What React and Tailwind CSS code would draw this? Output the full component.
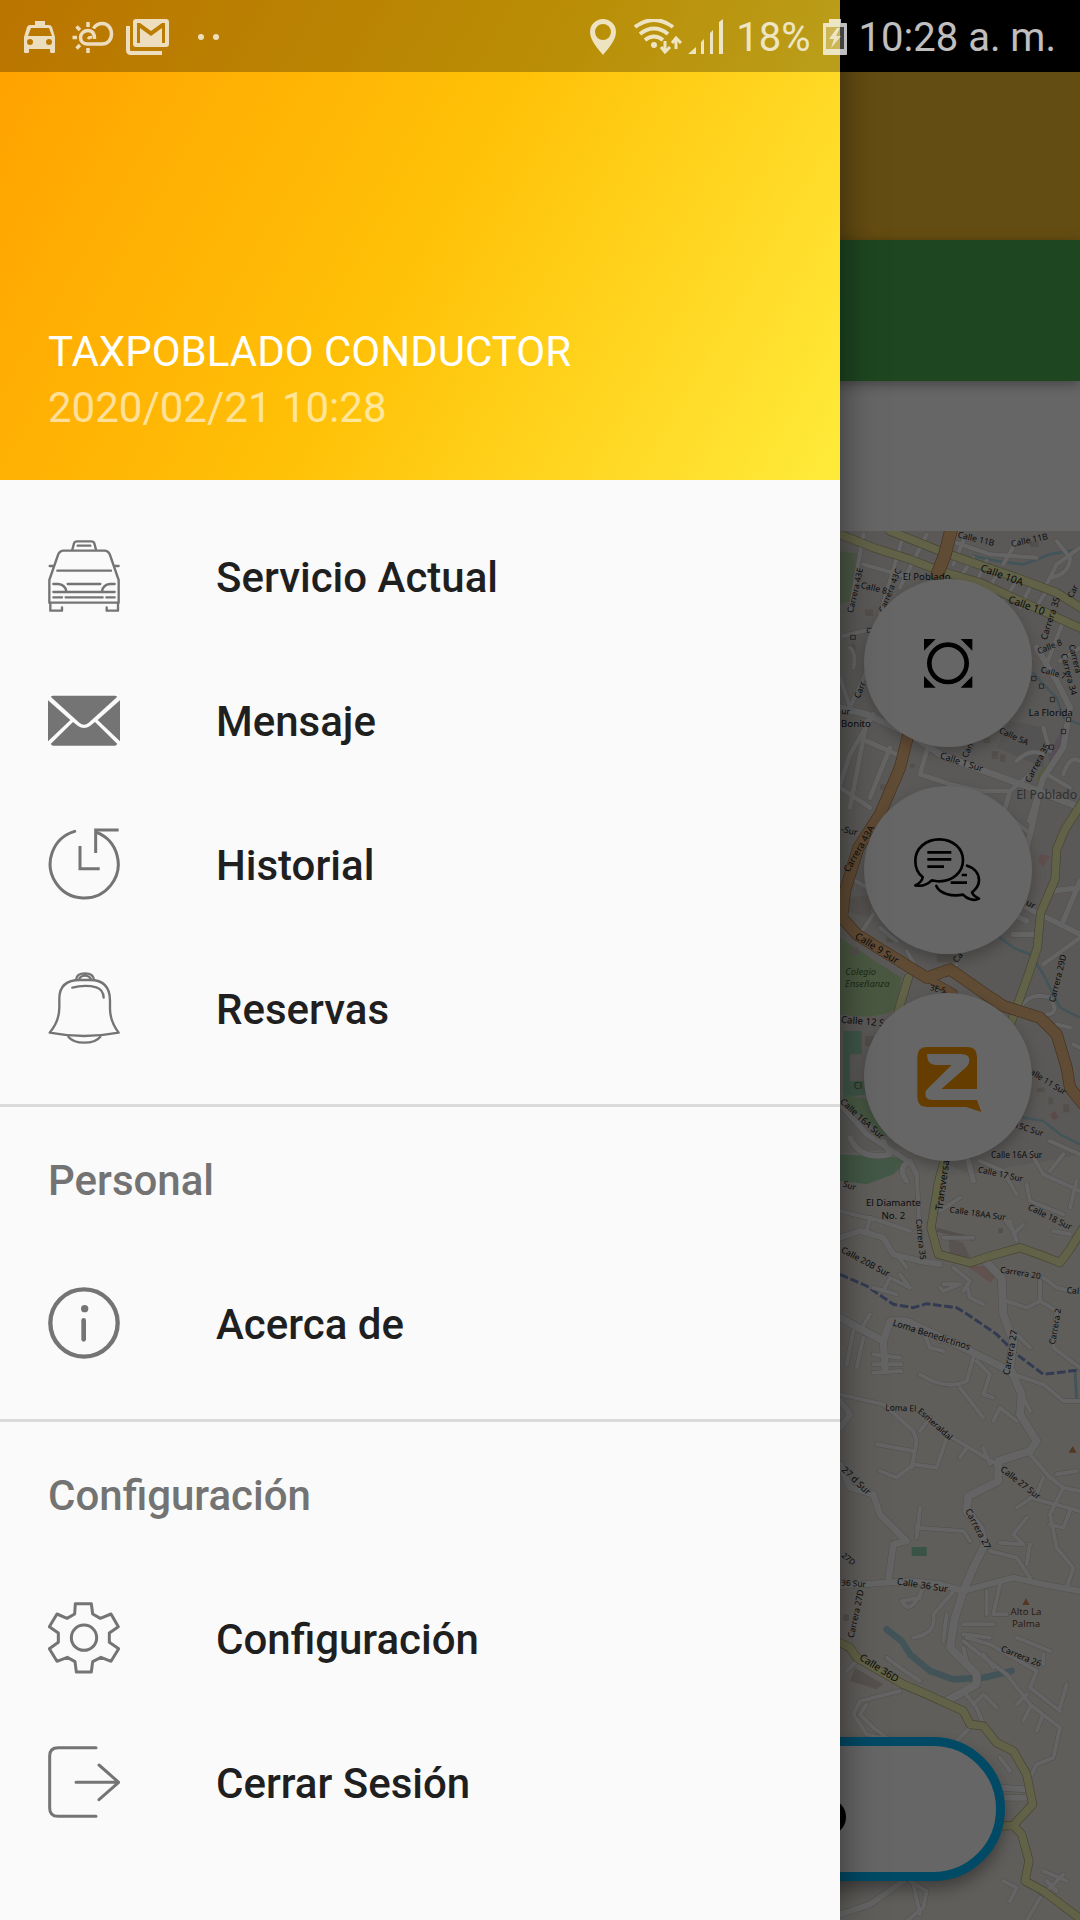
import { useState } from 'react';

// Map geometry. `w` is the road width, all values are in map units.
const landUse = [
    { d: 'M0 0H760V1980H0Z', fill: '#e2deda' },
    { d: 'M0 1900L240 1880L420 1960L760 1900V4300H0Z', fill: '#efebe4' },
    { d: 'M30 90L95 100L70 170L60 240L30 250Z', fill: '#bfdcb0' },
    { d: 'M30 1250L120 1310L215 1370L200 1460Q150 1500 30 1480Z', fill: '#b9dba3' },
    { d: 'M40 1530H95V1600H60V1680H110V1720L40 1730Z', fill: '#9fd6b8' },
    { d: 'M40 1720L140 1740L170 1850L60 1760Z', fill: '#b5dfa9' },
    { d: 'M30 1900L210 1910L230 1925L190 1960L110 1990L30 1980Z', fill: '#a9dcae' },
    { d: 'M540 600L650 620L640 740L500 680Z', fill: '#d3d0cf' },
    { d: 'M655 700L700 620L690 700L660 740Z', fill: '#d8c2d6' },
    { d: 'M625 760L650 730L640 780L620 800Z', fill: '#d3e58f' },
    { d: 'M630 1000L660 1005L640 1040L625 1020Z', fill: '#ecc3bd' },
    { d: 'M60 1130L130 1120L120 1190L45 1170Z', fill: '#d6cfc9' },
    { d: 'M410 2235L470 2235L500 2265L480 2285Z', fill: '#f3cdc6' },
    { d: 'M355 2150L400 2165L420 2210L360 2200Z', fill: '#dccfcb' },
    { d: 'M245 3078H290V3105H245Z', fill: '#8fd0ae' },
    { d: 'M75 3440L160 3490L140 3505L60 3480Z', fill: '#d6cbc5' },
    { d: 'M660 1780L675 1770L685 1790L670 1798Z', fill: '#e0b9b4' },
];

const buildings = [
    'M105 265h24v20h-24z', 'M140 300h16v26h-16z', 'M485 690h20v24h-20z', 'M510 700h16v22h-16z', 'M460 650h20v16h-20z',
    'M600 60h26v18h-26z', 'M62 370h14v24h-14z', 'M240 728h14v12h-14z', 'M150 790h22v16h-22z', 'M530 800h16v24h-16z',
    'M62 1280h24v22h-24z', 'M170 1250h26v14h-26z', 'M320 1300h60v24h-60z', 'M105 1545h26v30h-26z', 'M700 1750h18v24h-18z',
    'M655 1730h14v20h-14z', 'M620 1700h24v14h-24z', 'M320 2120l110 28v12l-110-28z', 'M505 2122h14v14h-14z', 'M40 3280h16v20h-16z',
];

const streets = [
    { w: 12, d: 'M100 40L60 270M215 60L150 280M290 40L210 200M100 130L240 170M400 60L370 130M430 110L390 170M470 120L440 180M510 140L480 200M560 180L520 240M600 200L570 260M650 210L610 270' },
    { w: 12, d: 'M40 345L120 325M60 380Q80 400 70 440M30 470L60 560L110 450M350 55L480 100L620 110M560 60L520 130M680 60L720 110Q720 160 660 170M640 210L680 130L750 80' },
    { w: 20, d: 'M30 560L110 580L240 640L330 700L450 745L600 800L750 860' },
    { w: 14, d: 'M130 580L60 700L30 790M110 600L60 860M180 680L120 830M30 800L120 860M110 660L200 700M290 690L270 760L360 790L450 810L540 810L520 880' },
    { w: 18, d: 'M630 800L610 900L560 1100M620 380L680 480L720 560L700 680L640 770L600 900' },
    { w: 12, d: 'M700 300L650 430L690 500M750 380L690 420M560 720Q600 680 640 700M650 760L720 800M660 690L640 620M700 760Q720 700 750 720M520 870L590 930M540 810L600 760' },
    { w: 16, d: 'M590 1160L650 1190L750 1240M700 1200L750 1080M670 1110L750 1100M550 1240H620M530 1170L590 1200' },
    { w: 12, d: 'M570 1460Q600 1410 660 1430Q690 1480 650 1480M640 1330L750 1250M680 1510L720 1520M730 1570L750 1580M230 1290L260 1340M200 1260L150 1220M90 1240L130 1180M60 1070L130 1110M240 1180L280 1210M340 1370L380 1330' },
    { w: 16, d: 'M235 1920L110 1840L30 1750M60 1850Q90 1920 180 1900L160 1860M230 1980Q200 1940 240 1920L260 1960M415 1920L430 1980' },
    { w: 12, d: 'M450 1920L520 1950L560 2020M600 1890L640 1960L750 2010M660 1860L750 1900M700 1900L660 1950M720 2060L740 1980M590 1990L600 2040L700 2080M540 2100L560 2160M520 2090L550 2130M580 2110L550 2140M670 2130L720 2140M260 1960L270 2140' },
    { w: 18, d: 'M30 2150L90 2130L160 2150L190 2200L270 2220L330 2230' },
    { w: 12, d: 'M110 2130L120 2090L240 2130M30 2070L110 2090M200 2200L230 2240M340 2150H430M340 2290H390L340 2310L330 2300M410 2290L420 2330L460 2350M370 2240L420 2280L400 2310M160 2310L180 2270L240 2300L210 2260M130 2300L200 2320M360 2050L330 2070L390 2030' },
    { w: 22, d: 'M30 2390L160 2460L165 2540M160 2460L180 2400L230 2400L400 2480L540 2550' },
    { w: 12, d: 'M130 2500L210 2510M130 2530L215 2530M130 2555L215 2550M70 2430L50 2530M100 2450L80 2540M120 2380L90 2430M280 2430L300 2480L340 2490M300 2430L330 2460M430 2510L410 2580Q350 2610 270 2560M440 2520L480 2560L460 2620L490 2630M390 2600L460 2690' },
    { w: 24, d: 'M470 2225L515 2270L520 2380L550 2460L540 2540L575 2620L570 2680L620 2760L600 2790L505 2820L505 2880L415 2925L410 2970L450 3020L465 3070L430 3140L400 3210L375 3290L360 3380L440 3460L440 3490L350 3540' },
    { w: 12, d: 'M530 2340L590 2360L630 2340V2280M640 2270L680 2300L720 2310M560 2440L600 2480M630 2340L680 2370L670 2480L750 2540M550 2560L640 2590L700 2640L750 2640M560 2700L510 2660L490 2700M580 2630L600 2670' },
    { w: 12, d: 'M30 2620L160 2650L250 2730L260 2760L245 2840M350 2750L320 2840L250 2830L200 2870L150 2850M140 2770L250 2790M350 2740L500 2830M270 2730L300 2690M390 2810L410 2780M460 2780L480 2830' },
    { w: 20, d: 'M30 2830L60 2900L130 2920L150 2980L210 3040L230 3060L190 3070L175 3180' },
    { w: 18, d: 'M30 3195L240 3180L330 3190L400 3210L550 3170L640 3190L750 3210M30 2640L60 2680L30 2720' },
    { w: 12, d: 'M600 2800L660 2870L700 2900L750 2910M640 2870L620 2920L560 2960M700 2900L660 2980L680 3080L730 3140L710 3200M680 2860L740 2850M600 2930L750 2970M720 2970L700 3020L660 3010M590 2990L550 3040L580 3070L510 3065' },
    { w: 12, d: 'M480 3090L560 3110L600 3170M600 3070L590 3130M260 3020L400 3030L420 3060M260 3050L270 2960M280 3200Q240 3290 215 3240L270 3230M380 3200L310 3280Q320 3340 250 3350M470 3210V3280M510 3190L490 3280H530M400 3310H490M400 3340L480 3350M350 3280L340 3360' },
    { w: 12, d: 'M400 3360L450 3400L530 3460L600 3550L690 3620L670 3710L620 3730L600 3770M400 3380L410 3420M410 3350L480 3370L620 3450L600 3500L690 3570M710 3490L690 3560M560 3350L660 3390M640 3400V3430M640 3580L620 3630M600 3560L580 3600M560 3550L590 3520' },
    { w: 12, d: 'M400 3510L440 3560L460 3610M430 3550L460 3520L500 3560M460 3400L490 3440M210 3510L90 3540L70 3580L110 3640L150 3650M110 3550L90 3580L130 3620L170 3650M170 3410L210 3440L270 3480M50 3450L80 3420M380 3660L420 3620' },
    { w: 18, d: 'M30 4180L120 4150L220 4080M510 3800L590 3805M530 3830H590' },
    { w: 12, d: 'M240 4080L290 4110L280 4160L230 4200M250 4090L270 4180M590 4080L640 4120L700 4060M640 4050L710 4080M650 4080L680 4110M520 4080L560 4100L540 4140M630 4130L590 4200M510 3710L540 3750' },
];

const rivers = [
    { w: 9, d: 'M430 105L500 120L580 130L660 100L750 85', stroke: '#a9d3df' },
    { w: 8, d: 'M610 455L640 490L680 530L700 590L750 610', stroke: '#a9d3df' },
    { w: 8, d: 'M510 1250L550 1280L600 1300L640 1360L690 1460L750 1490', stroke: '#a9d3df' },
    { w: 8, d: 'M580 1790L640 1800L690 1840L750 1870', stroke: '#a9d3df' },
    { w: 20, d: 'M170 3325L215 3360L240 3400L300 3450L370 3475L460 3470L545 3450', stroke: '#a9d3df' },
    { w: 9, d: 'M735 2550L740 2640', stroke: '#a9d3df' },
    { w: 9, d: 'M30 2260L110 2295L190 2350L250 2360L290 2348L380 2360L420 2385L500 2440L560 2500L640 2560L740 2548', stroke: '#7f93cf', dash: '26 8' },
];

const yellowRoads = [
    'M30 40L130 80L240 115L330 150L450 185L560 235L760 325',
    'M180 30L330 90L400 115L560 170L680 215L760 265',
    'M760 840L705 925L680 985L675 1075L632 1175L622 1280L592 1370L545 1500',
    'M235 1370L205 1470',
    'M348 1900L325 1985L303 2120L325 2200L420 2225L480 2205L570 2180L640 2205L690 2225L720 2185L760 2120',
    'M30 3365L60 3380L80 3410L220 3490L290 3520L400 3570L420 3610L460 3615L500 3665L550 3690L590 3760L608 3850L550 3913L520 3915M550 3913L575 3940L597 4020L585 4080L640 4110L760 4200',
];

const orangeRoads = [
    { w: 36, d: 'M365 20L345 100L322 160' },
    { w: 32, d: 'M235 640L210 740L150 880L85 980L45 1110L36 1190L80 1240L160 1290L290 1370L360 1345L460 1415L520 1455L630 1490L680 1540L710 1640L720 1700L760 1750' },
    { w: 20, d: 'M290 1370L370 1415' },
];

const labels = [
    [436, 62, 14, 'Calle 11B', 26], [600, 66, -12, 'Calle 11B', 26], [512, 172, 20, 'Calle 10A', 31], [586, 263, 20, 'Calle 10', 31],
    [290, 178, 0, 'El Poblado', 29], [84, 210, -77, 'Carrera 43E', 25], [188, 212, -68, 'Carrera 43C', 25], [130, 210, 14, 'Calle 8', 26],
    [670, 295, -72, 'Carrera 35', 27], [662, 385, -22, 'Calle 8', 25], [668, 464, 16, 'Calle 7', 25], [708, 462, 76, 'Carrera 34', 26],
    [727, 415, 76, 'Carrera', 25], [736, 215, -62, 'Car', 25], [662, 584, 0, 'La Florida', 29], [46, 580, 5, 'ur', 26],
    [78, 619, 0, 'Bonito', 29], [548, 654, 25, 'Calle 5A', 25], [630, 730, -62, 'Carrera 35', 26], [422, 690, -65, 'Carr', 25],
    [98, 510, -68, 'Carr', 26], [392, 732, 18, 'Calle 1 Sur', 27], [650, 834, 0, 'El Poblado', 37, '#777'], [56, 938, 14, '-Sur', 26],
    [95, 988, -60, 'Carrera 43A', 28], [598, 1158, 28, 'ur', 27], [136, 1290, 32, 'Calle 9 Sur', 30],
    [92, 1361, 0, 'Colegio', 28, '#4a6b3a', 'italic'], [112, 1397, 0, 'Enseñanza', 28, '#4a6b3a', 'italic'], [390, 1315, -50, 'Ca', 26],
    [322, 1412, 12, '3E-5', 24], [112, 1512, 5, 'Calle 12 Sur', 29], [692, 1374, -76, 'Carrera 29D', 26], [650, 1690, 32, 'alle 11 Sur', 25],
    [84, 1705, 0, 'Cl', 28, '#4a6b3a'], [90, 1800, 42, 'Calle 16A Sur', 27], [594, 1832, 18, '15C Sur', 25], [560, 1912, 0, 'Calle 16A Sur', 25],
    [510, 1968, 12, 'Calle 17 Sur', 25], [348, 1990, -82, 'Transversal', 30], [56, 2002, 18, 'Sur', 25], [190, 2056, 0, 'El Diamante', 29],
    [190, 2093, 0, 'No. 2', 29], [442, 2086, 8, 'Calle 18AA Sur', 25], [656, 2096, 26, 'Calle 18 Sur', 26], [264, 2156, 84, 'Carrera 35', 25],
    [102, 2230, 28, 'Calle 20B Sur', 26], [570, 2264, 9, 'Carrera 20', 25], [728, 2318, 5, 'Cal', 26], [302, 2450, 18, 'Loma Benedictinos', 27],
    [550, 2496, -80, 'Carrera 27', 28], [684, 2418, -80, 'Carrera 2', 25], [212, 2670, 2, 'Loma El', 25], [310, 2716, 42, 'Esmeraldal', 25],
    [72, 2886, 44, '27 d Sur', 28], [566, 2892, 38, 'Calle 27 Sur', 26], [436, 3028, 62, 'Carrera 27', 27], [50, 3120, 40, '27D', 24],
    [276, 3202, 9, 'Calle 36 Sur', 28], [70, 3196, 4, '36 Sur', 25], [86, 3280, -78, 'Carrera 27D', 26], [588, 3282, 0, 'Alto La', 29, '#6b4a35'],
    [588, 3318, 0, 'Palma', 29, '#6b4a35'], [142, 3450, 32, 'Calle 36D', 30], [570, 3414, 22, 'Carrera 26', 26],
];

function CityMap() {
    return (
        <svg viewBox="-2490 30 3240 4170" preserveAspectRatio="xMaxYMin slice" className="absolute inset-0 h-full w-full" role="img" aria-label="Mapa de El Poblado">
            {landUse.map((area) => <path key={area.d} d={area.d} fill={area.fill} />)}
            <path d="M-2490 0H0V4300H-2490Z" fill="#efebe4" />
            {buildings.map((d) => <path key={d} d={d} fill="#cfc6bd" />)}
            {rivers.map((r) => (
                <path key={r.d} d={r.d} fill="none" stroke={r.stroke} strokeWidth={r.w} strokeDasharray={r.dash} strokeLinecap={r.dash ? 'butt' : 'round'} strokeLinejoin="round" />
            ))}
            <g fill="none" strokeLinecap="round" strokeLinejoin="round">
                {streets.map((s) => <path key={`c${s.d}`} d={s.d} stroke="#c9c4bf" strokeWidth={s.w + 3} />)}
                {streets.map((s) => <path key={s.d} d={s.d} stroke="#fbfafa" strokeWidth={s.w} />)}
                {yellowRoads.map((d) => <path key={`c${d}`} d={d} stroke="#a8aa78" strokeWidth="27" />)}
                {yellowRoads.map((d) => <path key={d} d={d} stroke="#f3f4b4" strokeWidth="23" />)}
                {orangeRoads.map((r) => <path key={`c${r.d}`} d={r.d} stroke="#a87a4c" strokeWidth={r.w + 4} />)}
                {orangeRoads.map((r) => <path key={r.d} d={r.d} stroke="#f0bc84" strokeWidth={r.w} />)}
            </g>
            <g fill="none" stroke="#666" strokeWidth="3">
                <path d="M62 343h14v12h-14zM112 322h14v12h-14zM605 466h13v13h-13zM628 489h13v13h-13zM661 529h13v13h-13zM709 589h13v13h-13zM694 625h13v13h-13zM658 672h13v13h-13z" />
            </g>
            <path d="M588 3232L599 3252H577ZM728 2775L740 2795H716Z" fill="#d08a50" />
            {labels.map(([x, y, angle, text, size, color, fontStyle], index) => (
                <text
                    key={index}
                    transform={`translate(${x} ${y}) rotate(${angle})`}
                    textAnchor="middle"
                    fontFamily="Noto Sans, sans-serif"
                    fontSize={size}
                    fontStyle={fontStyle}
                    fill={color || '#222'}
                >
                    {text}
                </text>
            ))}
        </svg>
    );
}

const icons = {
    taxi: (
        <svg viewBox="54 60 216 216" className="h-18 w-18 shrink-0" fill="none" stroke="#747474" strokeWidth="7" strokeLinecap="round" strokeLinejoin="round">
            <path d="M127 89L132 70Q134 64 141 64H184Q191 64 193 70L198 89M143 77H181" />
            <path d="M58 248V180L84 105Q89 92 101 92H223Q235 92 240 105L266 180V248Z" />
            <path d="M59 138H71M254 138H266M82 152H243M113 192H211M70 192H84Q106 194 109 214M254 192H240Q219 194 216 214M70 216H254M70 232H96M107 232H218M229 232H254" />
            <path d="M61 250V272H96V262M264 250V272H230V262" />
        </svg>
    ),
    mail: (
        <svg viewBox="54 492 216 216" className="h-18 w-18 shrink-0">
            <path d="M68 527H256L262 530L176 608Q162 620 148 608L62 530Z" fill="#747474" />
            <path d="M54 541L121 600L54 664ZM270 541L203 600L270 664Z" fill="#747474" />
            <path d="M129 606L144 618Q162 630 180 618L195 606L262 672L256 677H68L62 672Z" fill="#747474" />
        </svg>
    ),
    history: (
        <svg viewBox="54 54 216 216" className="h-18 w-18 shrink-0" fill="none" stroke="#747474" strokeWidth="9">
            <path d="M134 64A102 102 0 1 0 200 67" strokeLinecap="round" />
            <path d="M266 60H197V129M150 108V176H209" />
        </svg>
    ),
    bell: (
        <svg viewBox="54 486 216 216" className="h-18 w-18 shrink-0" fill="none" stroke="#747474" strokeWidth="7" strokeLinecap="round" strokeLinejoin="round">
            <path d="M138 509Q140 490 165 490Q190 490 192 509M148 506Q153 497 165 497Q177 497 182 506" />
            <path d="M59 668Q88 634 88 592V566Q88 510 150 510H180Q240 510 240 572V596Q240 634 266 668Q162 688 59 668Z" />
            <path d="M127 533Q165 523 199 532Q220 539 221 563" />
            <path d="M115 680Q129 698 163 698Q197 698 211 680" />
        </svg>
    ),
    info: (
        <svg viewBox="54 52 216 216" className="h-18 w-18 shrink-0" fill="none" stroke="#747474">
            <circle cx="162" cy="160" r="101" strokeWidth="13" />
            <path d="M161 152V209" strokeWidth="14" strokeLinecap="round" />
            <circle cx="164" cy="117" r="11" fill="#747474" stroke="none" />
        </svg>
    ),
    gear: (
        <svg viewBox="54 37 216 216" className="h-18 w-18 shrink-0" fill="none" stroke="#747474" strokeWidth="9" strokeLinejoin="round">
            <path d="M136 42H184L188 73L211 86L243 73L265 111L238 130V158L266 177L243 215L213 203L188 216L184 247H139L135 216L112 203L81 215L58 177L85 158V130L58 111L81 73L111 86L134 73Z" />
            <circle cx="162" cy="144" r="38" />
        </svg>
    ),
    logout: (
        <svg viewBox="54 468 216 216" className="h-18 w-18 shrink-0" fill="none" stroke="#747474" strokeWidth="9" strokeLinecap="round" strokeLinejoin="round">
            <path d="M198 473H84Q59 473 59 498V654Q59 679 84 679H198" />
            <path d="M138 577H265M207 525L266 577L207 629" />
        </svg>
    ),
};

const menu = [
    { id: 'servicio', label: 'Servicio Actual', icon: icons.taxi },
    { id: 'mensaje', label: 'Mensaje', icon: icons.mail },
    { id: 'historial', label: 'Historial', icon: icons.history },
    { id: 'reservas', label: 'Reservas', icon: icons.bell },
];

const sections = [
    { title: 'Personal', items: [{ id: 'acerca', label: 'Acerca de', icon: icons.info }] },
    {
        title: 'Configuración',
        items: [
            { id: 'configuracion', label: 'Configuración', icon: icons.gear },
            { id: 'cerrar', label: 'Cerrar Sesión', icon: icons.logout },
        ],
    },
];

function MenuList({ items, selected, onSelect }) {
    return (
        <ul>
            {items.map((item) => (
                <li key={item.id}>
                    <button
                        type="button"
                        aria-current={selected === item.id}
                        onClick={() => onSelect(item.id)}
                        className="flex h-36 w-full items-center gap-24 px-12 text-left text-[42px] font-medium text-[#1f1f1f]"
                    >
                        {item.icon}
                        <span className="pt-0.5">{item.label}</span>
                    </button>
                </li>
            ))}
        </ul>
    );
}

function StatusBar() {
    return (
        <div className="absolute inset-x-0 top-0 z-20 flex h-18 items-center justify-between pt-0.5 pr-6 pl-6 text-[40px] text-white opacity-75">
            <div className="flex items-center gap-3">
                {/* taxi */}
                <svg viewBox="0 0 32 36" className="h-9 w-8" fill="currentColor" fillRule="evenodd">
                    <path d="M11 2H21V6H25Q27 6 28 8L31 18V33Q31 34 30 34H28Q26 34 26 33V30H5V33Q5 34 4 34H1Q0 34 0 33V18L3 8Q4 6 6 6H11ZM7 9L4 17H28L25 9ZM6 20A3 3 0 1 0 6 26A3 3 0 1 0 6 20ZM25 20A3 3 0 1 0 25 26A3 3 0 1 0 25 20Z" />
                </svg>
                {/* weather */}
                <svg viewBox="0 0 46 36" className="h-9 w-[46px]" fill="none" stroke="currentColor" strokeWidth="3.5">
                    <path d="M26.500 20C26.500 14.500 24 11.500 20 11.500C16 11.500 12.500 14.500 12.500 18.500C12.500 22.500 15.500 25 19.500 25H34C40 25 43.500 20.500 43.500 15C43.500 9 39.500 4.500 34.500 4.500C30 4.500 27.500 6 25.500 9.500" />
                    <path d="M20 20C21 18.500 22 18 24 18.500" strokeWidth="3" />
                    <path d="M20 3V8M20 29V34M4.500 18.500H9M8.500 7.500L12 11M12 26L8.500 29.500" />
                </svg>
                {/* gmail */}
                <svg viewBox="0 0 44 36" className="h-9 w-11" fill="none" stroke="currentColor">
                    <path d="M2 7V31Q2 34 5 34H36" strokeWidth="4" />
                    <path fill="currentColor" fillRule="evenodd" stroke="none" d="M10 0H40Q43 0 43 3V25Q43 28 40 28H10Q7 28 7 25V3Q7 0 10 0ZM11 4V24H14V9L25 17L36 9V24H39V4H36L25 12L14 4Z" />
                </svg>
                <svg viewBox="0 0 48 36" className="h-9 w-12" fill="currentColor">
                    <circle cx="19" cy="18" r="3" />
                    <circle cx="34" cy="18" r="3" />
                </svg>
            </div>
            <div className="flex items-center gap-3">
                {/* location */}
                <svg viewBox="0 0 32 36" className="h-9 w-8" fill="currentColor" fillRule="evenodd">
                    <path d="M13 0A13 13 0 0 1 26 13C26 21 18 30 13 36C8 30 0 21 0 13A13 13 0 0 1 13 0ZM13 5A8 8 0 1 0 13 21A8 8 0 1 0 13 5Z" />
                </svg>
                {/* wifi and signal */}
                <svg viewBox="0 0 90 36" className="h-9 w-[90px]" fill="none" stroke="currentColor" strokeWidth="4">
                    <path d="M1 8Q20 -6 39 8M6 15Q20 4 34 15M11 21Q20 14 29 21" />
                    <circle cx="20" cy="26" r="3" fill="currentColor" stroke="none" />
                    <path d="M31 22V33M27 28L31 33L36 28M42 30V19M38 24L42 19L47 24" strokeWidth="3" />
                    <path d="M54 35L62 28V35ZM67 35V23L70 20V35ZM76 35V14L79 11V35ZM85 35V3L89 0V35Z" fill="currentColor" stroke="none" />
                </svg>
                <span className="pt-0.5">18%</span>
                {/* battery */}
                <svg viewBox="0 0 24 36" className="h-9 w-6" fill="currentColor" fillRule="evenodd">
                    <path d="M6 0H18V4H23Q24 4 24 5V35Q24 36 23 36H1Q0 36 0 35V5Q0 4 1 4H6Z" fillOpacity="0.35" />
                    <path d="M6 0H18V4H23Q24 4 24 5V35Q24 36 23 36H1Q0 36 0 35V5Q0 4 1 4H6ZM3 8V30H21V8ZM14 9L6 20H11L8 29L18 17H13L17 9Z" />
                </svg>
                <span className="pt-0.5">10:28 a. m.</span>
            </div>
        </div>
    );
}

function FloatingButton({ label, viewBox, children }) {
    return (
        <button type="button" aria-label={label} className="h-42 w-42 rounded-full bg-white shadow-[0_6px_14px_rgba(0,0,0,0.25)]">
            <svg viewBox={viewBox} className="h-full w-full">{children}</svg>
        </button>
    );
}

function ServiceScreen() {
    return (
        <main className="absolute inset-0 flex flex-col">
            <div className="h-18 shrink-0 bg-black" />
            <div className="h-42 shrink-0 bg-[#fbc02d]" />
            <div className="z-10 h-[141px] shrink-0 bg-[#4caf50] shadow-[0_3px_12px_rgba(0,0,0,0.35)]" />
            <div className="h-[150px] shrink-0 bg-white" />
            <div className="relative flex flex-1 flex-col justify-between">
                <CityMap />
                <div className="relative flex flex-col items-end gap-[39px] pt-12 pr-12">
                    <FloatingButton label="Centrar mapa" viewBox="104 177 504 504">
                        <circle cx="356" cy="430" r="56" fill="none" stroke="#000" strokeWidth="14" />
                        <path d="M284 357H319L284 392ZM429 357H394L429 392ZM284 503V468L319 503ZM429 503V468L394 503Z" />
                    </FloatingButton>
                    <FloatingButton label="Chat" viewBox="14 48 504 504">
                        <g fill="none" stroke="#000" strokeWidth="8" strokeLinecap="round" strokeLinejoin="round">
                            <path d="M190 321C174 309 168 292 168 272C168 235 200 208 240 208C280 208 311 235 311 270C311 307 280 334 240 334C232 334 225 332 217 331C205 343 187 350 168 346C180 340 189 333 190 321Z" />
                            <path d="M323 287C347 294 359 312 359 331C359 347 350 358 338 367C340 376 349 381 359 386C343 394 323 387 311 374C277 381 240 370 231 348" />
                        </g>
                        <path d="M204 247H276M204 268H276M204 290H254M307 315H323M274 338H323" fill="none" stroke="#000" strokeWidth="8" />
                    </FloatingButton>
                    <FloatingButton label="Zello" viewBox="104 429 504 504">
                        <path d="M293 591H414Q443 591 443 620V750L456 786L411 771H293Q264 771 264 742V620Q264 591 293 591Z" fill="#ff9a00" />
                        <path d="M293 612H394Q420 612 420 630Q420 642 412 650L336 717H445L443 750H312Q288 750 288 731Q288 722 297 714L367 645H318Q293 645 293 612Z" fill="#fff" />
                    </FloatingButton>
                </div>
                <div className="relative px-[75px] pb-[39px]">
                    <button type="button" aria-label="Estado" className="flex h-36 w-full items-center justify-end rounded-full border-9 border-[#00b8ff] bg-white pt-4 pr-[150px] shadow-[0_8px_16px_rgba(0,0,0,0.35)]">
                        <span className="h-9 w-9 rounded-full bg-black" />
                    </button>
                </div>
            </div>
        </main>
    );
}

function App() {
    const [selected, setSelected] = useState('servicio');

    return (
        <div className="relative min-h-screen overflow-hidden font-[Roboto,sans-serif]">
            <ServiceScreen />
            <div className="absolute inset-x-0 top-18 bottom-0 z-10 bg-black/60" />
            <StatusBar />

            {/* Drawer */}
            <aside className="relative z-10 min-h-screen w-7/9 bg-[#fafafa] shadow-[0_0_36px_rgba(0,0,0,0.5)]">
                <header className="flex h-120 flex-col bg-[linear-gradient(120deg,#ffa000,#ffc107_50%,#ffeb3b)] text-[42px]">
                    <div className="h-18 shrink-0 bg-black/27" />
                    <div className="flex flex-1 flex-col justify-end px-12 pb-11 leading-14">
                        <h1 className="text-white">TAXPOBLADO CONDUCTOR</h1>
                        <p className="text-white/60">2020/02/21 10:28</p>
                    </div>
                </header>
                <nav className="pt-6 pb-6">
                    <MenuList items={menu} selected={selected} onSelect={setSelected} />
                    {sections.map((section) => (
                        <section key={section.title} className="mt-6 border-t-3 border-[#dadada]">
                            <h2 className="flex h-36 items-center px-12 pt-0.5 text-[42px] font-medium text-[#737373]">{section.title}</h2>
                            <MenuList items={section.items} selected={selected} onSelect={setSelected} />
                        </section>
                    ))}
                </nav>
            </aside>
        </div>
    );
}

export default App;
